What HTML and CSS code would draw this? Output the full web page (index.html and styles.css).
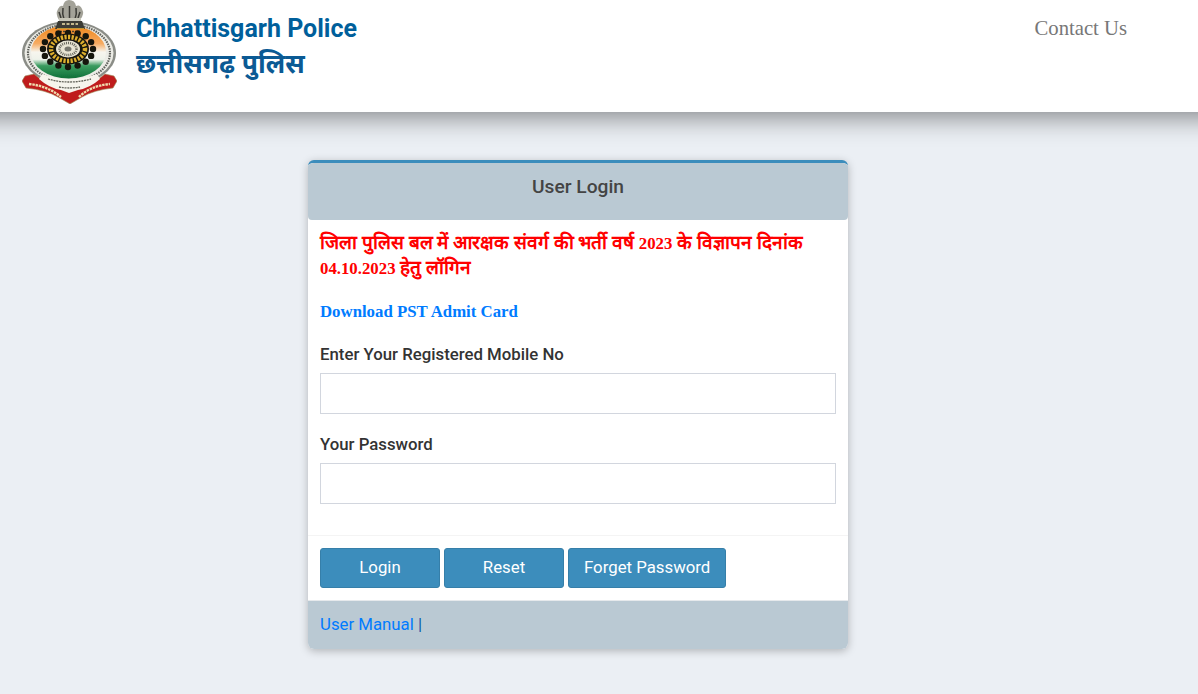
FILE: index.html
```html
<!DOCTYPE html>
<html lang="hi">
<head>
  <meta charset="UTF-8" />
  <meta name="viewport" content="width=device-width, initial-scale=1" />
  <title>User Login - Chhattisgarh Police</title>
  <link rel="stylesheet" href="styles.css">
</head>
<body>

<header class="topbar">
  <div class="brand">
    <svg class="brand-logo" viewBox="0 0 95 104" width="95" height="104" aria-label="Chhattisgarh Police emblem">
      <defs>
        <linearGradient id="tricolor" x1="0" y1="0" x2="0" y2="1">
          <stop offset="0" stop-color="#ee8418"/>
          <stop offset="0.34" stop-color="#f6ab62"/>
          <stop offset="0.5" stop-color="#f7f5ee"/>
          <stop offset="0.64" stop-color="#eef2ea"/>
          <stop offset="0.76" stop-color="#3b9c5f"/>
          <stop offset="1" stop-color="#0f6f38"/>
        </linearGradient>
        <filter id="soft" x="-5%" y="-5%" width="110%" height="110%">
          <feGaussianBlur stdDeviation="0.4"/>
        </filter>
      </defs>
      <g filter="url(#soft)">
        <!-- seal -->
        <ellipse cx="47" cy="53" rx="47" ry="32" fill="#8b8d87"/>
        <ellipse cx="47" cy="53" rx="44.500" ry="30" fill="#ecece6"/>
        <ellipse cx="47" cy="53" rx="41" ry="28.500" fill="none" stroke="#5f615b" stroke-width="2.200" stroke-dasharray="1.500 1"/>
        <ellipse cx="46.500" cy="52" rx="37.500" ry="26.500" fill="url(#tricolor)"/>
        <!-- lions -->
        <path d="M37 20 Q33 14 36 9 Q38 5 41 6 Q42 0 47 0 Q53 0 54 6 Q58 4 60 9 Q63 14 58 20 Z" fill="#a3a298"/>
        <path d="M41 8 Q40 14 42 19 M47.500 6 V19 M54 8 Q55 14 53 19 M37 12 L39 18 M58 12 L56 18" stroke="#3a3a35" stroke-width="1.500" fill="none"/>
        <path d="M37 18 H59 V22 H37 Z" fill="#c5c4b6"/>
        <path d="M36 21 H60 L63 29 H33 Z" fill="#3a3a34"/>
        <path d="M40 24 H56" stroke="#c4b98e" stroke-width="2" stroke-dasharray="3 1.500"/>
        <path d="M35 28.500 H62" stroke="#c9a23a" stroke-width="0.900"/>
        <path d="M38 31.500 H58" stroke="#4a4030" stroke-width="1.300" stroke-dasharray="2 1"/>
        <!-- chakra -->
        <g fill="#17140f">
          <circle cx="71" cy="49" r="3.200"/><circle cx="69.100" cy="55.900" r="3.200"/><circle cx="63.700" cy="61.700" r="3.200"/><circle cx="55.600" cy="65.600" r="3.200"/>
          <circle cx="46" cy="67" r="3.200"/><circle cx="36.400" cy="65.600" r="3.200"/><circle cx="28.300" cy="61.700" r="3.200"/><circle cx="22.900" cy="55.900" r="3.200"/>
          <circle cx="21" cy="49" r="3.200"/><circle cx="22.900" cy="42.100" r="3.200"/><circle cx="28.300" cy="36.300" r="3.200"/><circle cx="36.400" cy="33.400" r="3.200"/>
          <circle cx="46" cy="33" r="3.200"/><circle cx="55.600" cy="33.400" r="3.200"/><circle cx="63.700" cy="36.300" r="3.200"/><circle cx="69.100" cy="42.100" r="3.200"/>
        </g>
        <ellipse cx="46" cy="49" rx="21" ry="15.500" fill="#17140f"/>
        <ellipse cx="46" cy="49" rx="17" ry="12" fill="none" stroke="#dcae2e" stroke-width="4.500" stroke-dasharray="2.200 1.400"/>
        <ellipse cx="46" cy="49" rx="12" ry="8.500" fill="#e8e5d4"/>
        <ellipse cx="46" cy="49" rx="8.500" ry="6" fill="none" stroke="#66665c" stroke-width="2.500" stroke-dasharray="1 1"/>
        <ellipse cx="46" cy="49" rx="3.500" ry="2.500" fill="#77776e"/>
        <!-- scroll -->
        <path d="M0 81 L3 76 L12 74 L17 78 Q30 84 47 84 Q64 84 78 78 L83 74 L92 76 L95 81 L91 88 Q72 90 60 97 L48 104 L36 97 Q24 90 4 88 Z" fill="#bf1f1e" stroke="#9a8a58" stroke-width="0.600"/>
        <path d="M20 74 Q47 84 75 74 L78 79 Q68 88 56 90 L47 93 L39 90 Q27 88 17 79 Z" fill="#f6f4ec"/>
        <path d="M26 79 Q47 85 69 79 M37 87 Q47 89 58 87" stroke="#66665c" stroke-width="1.300" fill="none" stroke-dasharray="2 0.800"/>
        <path d="M7 84 Q26 86 39 97 M57 97 Q68 86 88 84" stroke="#f0dcae" stroke-width="2.300" fill="none" stroke-dasharray="2.500 0.800"/>
      </g>
    </svg>
    <div class="brand-name">
      <div class="brand-en">Chhattisgarh Police</div>
      <div class="brand-hi">छत्तीसगढ़ पुलिस</div>
    </div>
  </div>
  <a href="#" class="nav-link">Contact Us</a>
</header>

<main class="page">
  <form class="login-box">
    <div class="login-head">User Login</div>
    <div class="login-body">
      <h4 class="notice">जिला पुलिस बल में आरक्षक संवर्ग की भर्ती वर्ष <span class="num">2023</span> के विज्ञापन दिनांक <span class="num">04.10.2023</span> हेतु लॉगिन</h4>
      <a href="#" class="admit-link">Download PST Admit Card</a>
      <div class="field">
        <label for="mobile">Enter Your Registered Mobile No</label>
        <input type="text" id="mobile" />
      </div>
      <div class="field">
        <label for="password">Your Password</label>
        <input type="password" id="password" />
      </div>
    </div>
    <div class="login-actions">
      <button type="submit" class="btn btn-wide">Login</button>
      <button type="reset" class="btn btn-wide">Reset</button>
      <button type="button" class="btn">Forget Password</button>
    </div>
    <div class="login-foot"><a href="#">User Manual</a> |</div>
  </form>
</main>

</body>
</html>
```
FILE: styles.css
```css
* { box-sizing: border-box; margin: 0; padding: 0; }
html, body { height: 100%; overflow: hidden; }
body {
  font-family: Roboto, "Noto Sans", sans-serif;
  background: #ebeff4;
  color: #333;
}
/* wider than the window so the shadow does not fade at the sides */
.topbar {
  height: 112px;
  margin: 0 -30px;
  background: white;
  display: flex;
  justify-content: space-between;
  box-shadow: 0 5px 25px rgba(0,0,0,0.45);
  padding: 0 101px 0 52px;
  position: relative;
}
.brand {
  display: flex;
  gap: 19px;
}
.brand-logo {
  display: block;
}
.brand-name {
  padding-top: 13px;
  color: #005f9b;
  font-weight: bold;
}
.brand-en {
  font-size: 25px;
  line-height: 32px;
}
.brand-hi {
  font-family: "Noto Sans", Roboto, sans-serif;
  font-size: 26.4px;
  line-height: 37px;
  color: #0b5a94;
}
.nav-link {
  font-family: "Liberation Serif", serif;
  font-size: 20.7px;
  color: #777;
  text-decoration: none;
  padding-top: 17px;
}
.page {
  padding-top: 48px;
}
.login-box {
  width: 540px;
  margin-left: 308px;
  background: white;
  border-top: 3px solid #3c8dbc;
  border-radius: 6px;
  box-shadow: 0 2px 8px rgba(0,0,0,0.25);
  overflow: hidden;
}
.login-head {
  height: 57px;
  background: #bac9d3;
  color: #444;
  font-size: 19.2px;
  font-weight: 500;
  text-align: center;
  padding-top: 12px;
  border-radius: 0 0 4px 4px;
}
.login-body {
  padding: 10px 12px 31px;
  border-bottom: 1px solid #f4f4f4;
}
.notice {
  font-family: "Liberation Serif", serif;
  font-size: 19px;
  line-height: 25px;
  font-weight: bold;
  color: #f00;
  margin-bottom: 20px;
}
.notice .num {
  font-size: 16.8px;
  line-height: 1;
}
.admit-link {
  display: block;
  font-family: "Liberation Serif", serif;
  font-size: 16.8px;
  font-weight: bold;
  line-height: 24px;
  color: #007bff;
  text-decoration: none;
  margin-bottom: 18px;
}
.field {
  margin-bottom: 18px;
}
.field:last-child {
  margin-bottom: 0;
}
.field label {
  display: block;
  font-size: 16.8px;
  font-weight: 500;
  line-height: 24px;
  margin-bottom: 7px;
}
.field input {
  display: block;
  width: 100%;
  height: 41px;
  border: 1px solid #d2d6de;
  background: white;
}
.login-actions {
  display: flex;
  gap: 4px;
  padding: 12px 12px;
}
.btn {
  height: 40px;
  padding: 0 15px 2px;
  background: #3c8dbc;
  border: 1px solid #367fa9;
  border-radius: 3px;
  color: white;
  font-family: Roboto, sans-serif;
  font-size: 16.8px;
  cursor: pointer;
}
.btn-wide {
  width: 120px;
}
.login-foot {
  height: 49px;
  background: #bac9d3;
  border-top: 1px solid #e6e9ec;
  padding: 11px 12px;
  font-size: 16.8px;
  line-height: 24px;
  color: #0a5aa8;
}
.login-foot a {
  color: #007bff;
  text-decoration: none;
}
```
